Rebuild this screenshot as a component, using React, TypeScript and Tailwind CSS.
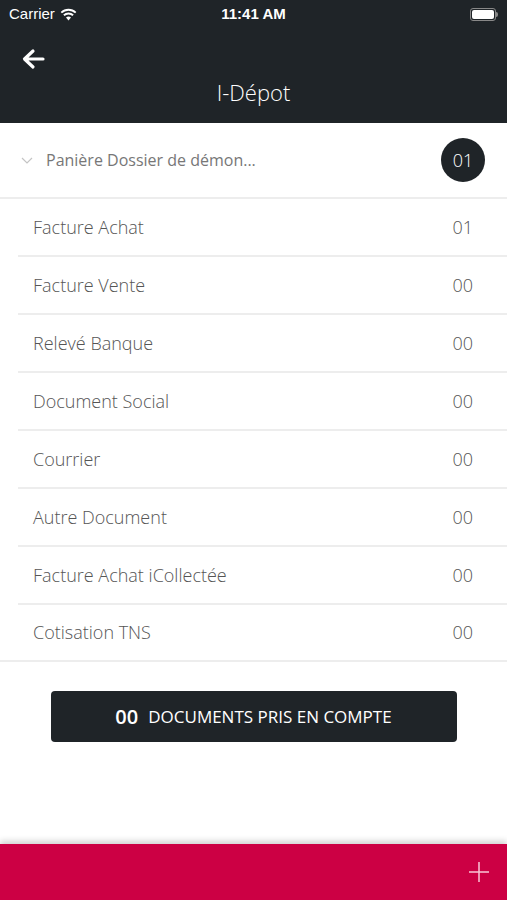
import React from "react";

interface Row {
  label: string;
  count: string;
}

const rows: Row[] = [
  { label: "Facture Achat", count: "01" },
  { label: "Facture Vente", count: "00" },
  { label: "Relevé Banque", count: "00" },
  { label: "Document Social", count: "00" },
  { label: "Courrier", count: "00" },
  { label: "Autre Document", count: "00" },
  { label: "Facture Achat iCollectée", count: "00" },
  { label: "Cotisation TNS", count: "00" },
];

const App: React.FC = () => {
  return (
    <div
      className="w-[507px] h-[900px] bg-white flex flex-col overflow-hidden"
      style={{ fontFamily: '"Open Sans", "Liberation Sans", sans-serif' }}
    >
      {/* Header */}
      <div className="bg-[#1f2428] h-[123px] flex flex-col text-white">
        <div className="h-[28px] flex items-center justify-between px-[9px] text-[15px]">
          <div className="flex items-center gap-[5px] w-[120px]">
            <span style={{ fontFamily: '"Liberation Sans", sans-serif' }}>Carrier</span>
            <svg width="17" height="13" viewBox="0 0 17 13">
              <path d="M8.5 12.5L6 9.6a3.6 3.6 0 0 1 5 0Z" fill="white" />
              <path d="M3.9 7.3a6.6 6.6 0 0 1 9.2 0" stroke="white" strokeWidth="1.9" fill="none" />
              <path d="M1.3 4.6a10.4 10.4 0 0 1 14.4 0" stroke="white" strokeWidth="1.9" fill="none" />
            </svg>
          </div>
          <span className="font-semibold" style={{ fontFamily: '"Liberation Sans", sans-serif' }}>
            11:41 AM
          </span>
          <div className="w-[120px] flex justify-end items-center">
            <div className="w-[26px] h-[13px] rounded-[3px] border border-[#888] p-[1px]">
              <div className="w-full h-full bg-white rounded-[2px]" />
            </div>
            <div className="w-[2px] h-[5px] bg-[#888] rounded-r-sm" />
          </div>
        </div>
        <div className="h-[60px] flex items-center px-[21px] pt-[2px]">
          <svg width="24" height="22" viewBox="0 0 24 22">
            <path
              d="M22 11H4M12 3L3.5 11 12 19"
              stroke="white"
              strokeWidth="3.2"
              fill="none"
              strokeLinecap="round"
              strokeLinejoin="round"
            />
          </svg>
        </div>
        <div className="text-center text-[22px] font-light leading-none -mt-[7px]">I-Dépot</div>
      </div>

      {/* Group header */}
      <div className="h-[76px] flex items-center pl-[21px] pr-[22px] border-b-2 border-[#ededed]">
        <svg width="12" height="7" viewBox="0 0 12 7" className="mr-[13px]">
          <path d="M1 1l5 5 5-5" stroke="#c4c4c4" strokeWidth="1.2" fill="none" />
        </svg>
        <span className="flex-1 text-[16px] text-[#777]">Panière Dossier de démon...</span>
        <div className="w-[44px] h-[44px] rounded-full bg-[#1f2428] text-white flex items-center justify-center text-[18px] font-light">
          01
        </div>
      </div>

      {/* Rows */}
      <div className="pl-[18px]">
        {rows.map((row, i) => (
          <div
            key={row.label}
            className={`flex items-center pl-[15px] pr-[34px] ${
              i < rows.length - 1 ? "h-[58px] border-b-2 border-[#ededed]" : "h-[55px]"
            }`}
          >
            <span className="flex-1 text-[18px] text-[#555] font-light">{row.label}</span>
            <span className="text-[18px] text-[#555] font-light">{row.count}</span>
          </div>
        ))}
      </div>
      <div className="h-[2px] bg-[#ededed]" />

      {/* Button */}
      <div className="flex justify-center pt-[29px]">
        <div className="w-[406px] h-[51px] rounded-[4px] bg-[#1f2428] flex items-center justify-center gap-[10px] text-white">
          <span className="text-[20px] font-semibold">00</span>
          <span className="text-[17px]">DOCUMENTS PRIS EN COMPTE</span>
        </div>
      </div>

      <div className="flex-1" />

      {/* Bottom bar */}
      <div className="h-[56px] bg-[#cc0044] shadow-[0_-3px_6px_rgba(0,0,0,0.18)] flex items-center justify-end pr-[18px]">
        <svg width="20" height="20" viewBox="0 0 20 20">
          <path d="M10 0v20M0 10h20" stroke="#f9c6d6" strokeWidth="1.5" />
        </svg>
      </div>
    </div>
  );
};

export default App;
